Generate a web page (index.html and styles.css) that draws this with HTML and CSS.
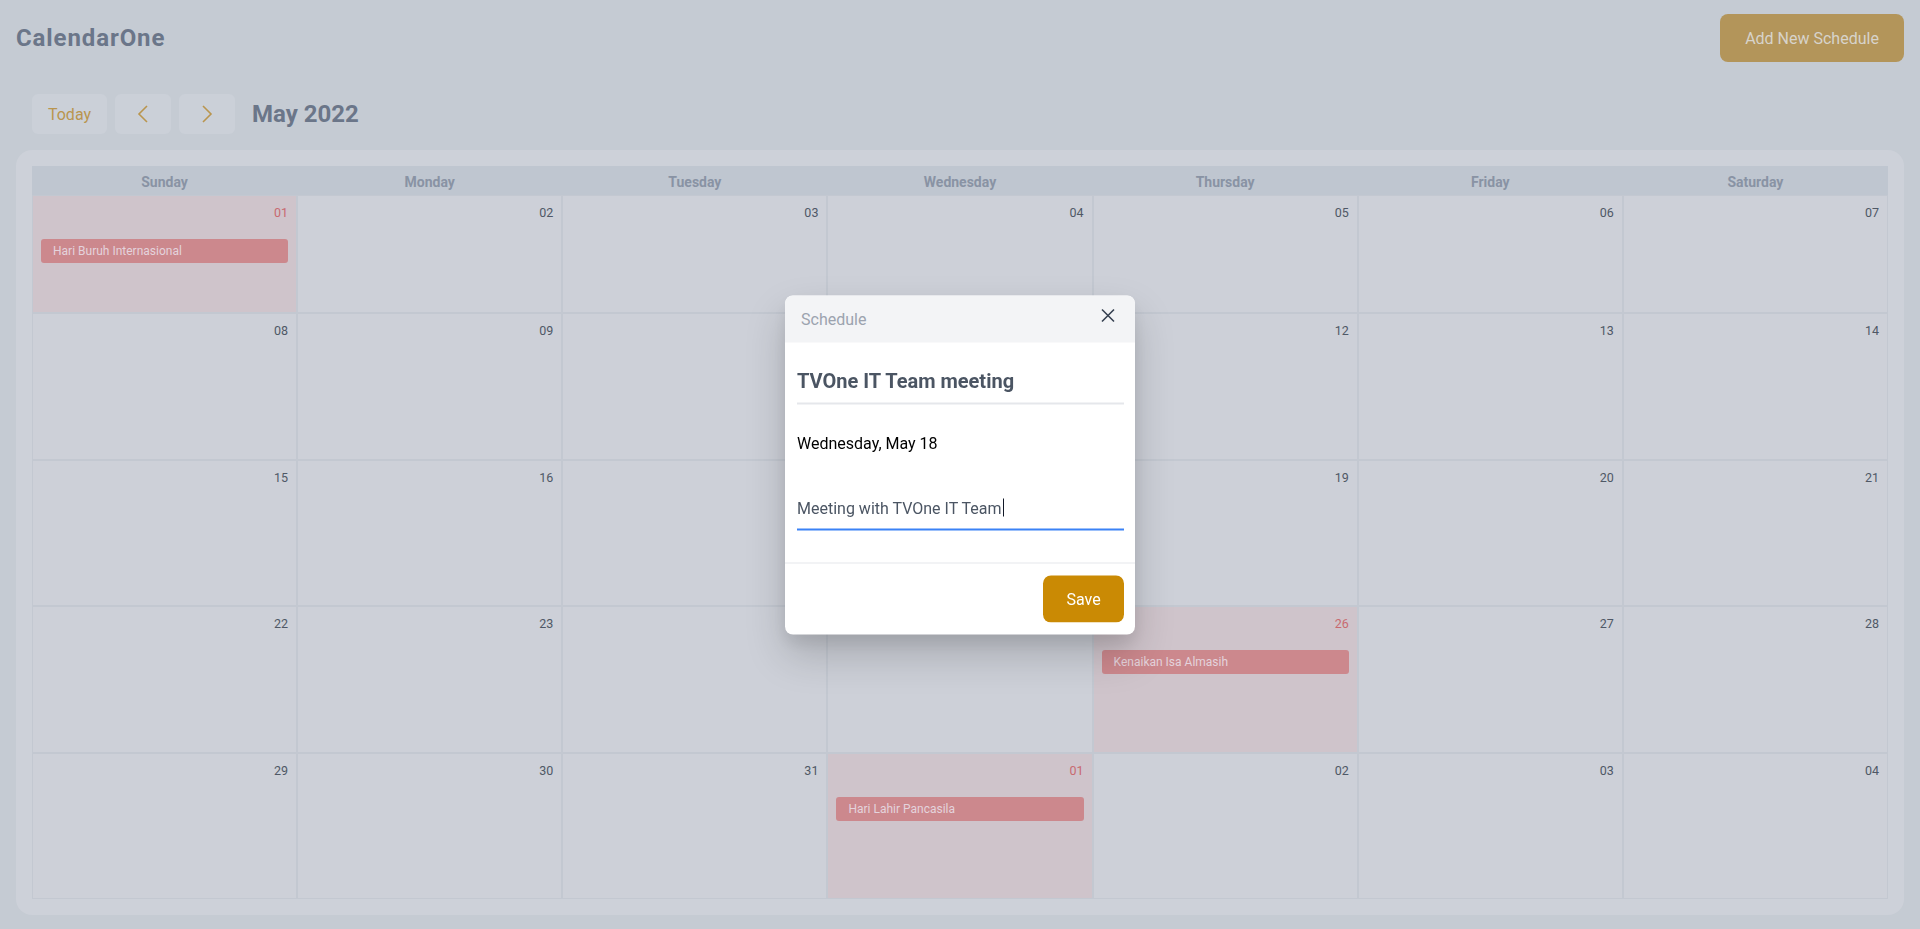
FILE: index.html
```html
<!DOCTYPE html>
<html lang="en">
<head>
<meta charset="utf-8">
<title>CalendarOne</title>
<link rel="stylesheet" href="styles.css">
</head>
<body>
<div class="page">
  <header class="topbar">
    <h1 class="brand">CalendarOne</h1>
    <button class="btn-add">Add New Schedule</button>
  </header>

  <div class="toolbar">
    <button class="tb-btn tb-today">Today</button>
    <button class="tb-btn tb-nav" aria-label="Previous">
      <svg width="12" height="18" viewBox="0 0 12 18"><path d="M10 1 L2 9 L10 17" fill="none" stroke="#b9954e" stroke-width="1.6"/></svg>
    </button>
    <button class="tb-btn tb-nav" aria-label="Next">
      <svg width="12" height="18" viewBox="0 0 12 18"><path d="M2 1 L10 9 L2 17" fill="none" stroke="#b9954e" stroke-width="1.6"/></svg>
    </button>
    <h2 class="month">May 2022</h2>
  </div>

  <section class="card">
    <div class="grid">
      <div class="dow">Sunday</div>
      <div class="dow">Monday</div>
      <div class="dow">Tuesday</div>
      <div class="dow">Wednesday</div>
      <div class="dow">Thursday</div>
      <div class="dow">Friday</div>
      <div class="dow">Saturday</div>

      <div class="cell holiday"><div class="date">01</div><div class="event">Hari Buruh Internasional</div></div>
      <div class="cell"><div class="date">02</div></div>
      <div class="cell"><div class="date">03</div></div>
      <div class="cell"><div class="date">04</div></div>
      <div class="cell"><div class="date">05</div></div>
      <div class="cell"><div class="date">06</div></div>
      <div class="cell"><div class="date">07</div></div>

      <div class="cell"><div class="date">08</div></div>
      <div class="cell"><div class="date">09</div></div>
      <div class="cell"><div class="date">10</div></div>
      <div class="cell"><div class="date">11</div></div>
      <div class="cell"><div class="date">12</div></div>
      <div class="cell"><div class="date">13</div></div>
      <div class="cell"><div class="date">14</div></div>

      <div class="cell"><div class="date">15</div></div>
      <div class="cell"><div class="date">16</div></div>
      <div class="cell"><div class="date">17</div></div>
      <div class="cell"><div class="date">18</div></div>
      <div class="cell"><div class="date">19</div></div>
      <div class="cell"><div class="date">20</div></div>
      <div class="cell"><div class="date">21</div></div>

      <div class="cell"><div class="date">22</div></div>
      <div class="cell"><div class="date">23</div></div>
      <div class="cell"><div class="date">24</div></div>
      <div class="cell"><div class="date">25</div></div>
      <div class="cell holiday"><div class="date">26</div><div class="event">Kenaikan Isa Almasih</div></div>
      <div class="cell"><div class="date">27</div></div>
      <div class="cell"><div class="date">28</div></div>

      <div class="cell"><div class="date">29</div></div>
      <div class="cell"><div class="date">30</div></div>
      <div class="cell"><div class="date">31</div></div>
      <div class="cell holiday"><div class="date">01</div><div class="event">Hari Lahir Pancasila</div></div>
      <div class="cell"><div class="date">02</div></div>
      <div class="cell"><div class="date">03</div></div>
      <div class="cell"><div class="date">04</div></div>
    </div>
  </section>
</div>

<div class="modal" role="dialog">
  <div class="modal-head">
    <span class="modal-label">Schedule</span>
    <svg class="modal-close" width="14" height="14" viewBox="0 0 14 14"><path d="M1 1 L13 13 M13 1 L1 13" stroke="#374151" stroke-width="1.6" fill="none"/></svg>
  </div>
  <div class="modal-body">
    <div class="field-title">TVOne IT Team meeting</div>
    <div class="field-date">Wednesday, May 18</div>
    <div class="field-desc">Meeting with TVOne IT Team<span class="caret"></span></div>
  </div>
  <div class="modal-foot">
    <button class="btn-save">Save</button>
  </div>
</div>
</body>
</html>
```

FILE: styles.css
```css
* { box-sizing: border-box; }

html, body {
  margin: 0;
  height: 100%;
}

body {
  background: #c5cbd3;
  font-family: Roboto, "Noto Sans", Arial, sans-serif;
  overflow: hidden;
}

button {
  font-family: inherit;
  border: none;
  cursor: pointer;
}

.page {
  padding: 14px 16px 0 16px;
}

.topbar {
  display: flex;
  align-items: center;
  justify-content: space-between;
  height: 48px;
}

.brand {
  margin: 0;
  font-size: 24px;
  font-weight: 700;
  color: #6b7689;
  letter-spacing: 0.9px;
}

.btn-add {
  width: 184px;
  height: 48px;
  background: #b3955a;
  color: #d7d3cb;
  font-size: 16px;
  border-radius: 8px;
}

.toolbar {
  display: flex;
  align-items: center;
  gap: 8px;
  margin-top: 32px;
  padding-left: 16px;
}

.tb-btn {
  height: 40px;
  background: #cbd0d8;
  border-radius: 6px;
  display: flex;
  align-items: center;
  justify-content: center;
  padding: 0;
}

.tb-today {
  width: 75px;
  color: #b9954e;
  font-size: 16px;
}

.tb-nav {
  width: 56px;
}

.month {
  margin: 0 0 0 9px;
  font-size: 24px;
  font-weight: 700;
  color: #6b7689;
}

.card {
  margin-top: 16px;
  background: #cdd1d9;
  border-radius: 16px;
  padding: 16px;
}

.grid {
  display: grid;
  grid-template-columns: repeat(7, 1fr);
  grid-template-rows: 29px 118px repeat(4, 146.5px);
}

.dow {
  background: #bfc6d0;
  color: #8993a4;
  font-size: 14px;
  font-weight: 700;
  display: flex;
  align-items: center;
  justify-content: center;
  padding-top: 2px;
}

.cell {
  background: #cdd0d8;
  border: 1px solid #c3c8d1;
}

.cell.holiday {
  background: #cfc4cb;
}

.date {
  padding: 10px 8px 0 8px;
  text-align: right;
  font-size: 12.5px;
  line-height: 14px;
  color: #4f5866;
}

.holiday .date {
  color: #c86a70;
}

.event {
  margin: 19px 8px 0 8px;
  height: 24px;
  line-height: 24px;
  padding-left: 12px;
  background: #cc888d;
  color: #e4d3dc;
  font-size: 12px;
  border-radius: 3px;
  white-space: nowrap;
  overflow: hidden;
}

/* Modal */
.modal {
  position: fixed;
  left: 50%;
  top: 50%;
  transform: translate(-50%, -50%);
  width: 350px;
  background: #ffffff;
  border-radius: 8px;
  overflow: hidden;
  box-shadow: 0 20px 40px rgba(0, 0, 0, 0.18), 0 8px 16px rgba(0, 0, 0, 0.08);
}

.modal-head {
  height: 47px;
  background: #f3f4f6;
  display: flex;
  align-items: center;
  justify-content: space-between;
  padding: 0 20px 0 16px;
}

.modal-label {
  color: #9ca3af;
  font-size: 16px;
}

.modal-close {
  margin-top: -6px;
}

.modal-body {
  padding: 16px 11px 32px 12px;
}

.field-title {
  padding: 8px 0;
  line-height: 28px;
  font-size: 20px;
  font-weight: 700;
  color: #4b5563;
  border-bottom: 2px solid #e5e7eb;
}

.field-date {
  margin-top: 27px;
  line-height: 24px;
  font-size: 16px;
  color: #000000;
}

.field-desc {
  margin-top: 33px;
  padding: 8px 0;
  line-height: 24px;
  font-size: 16px;
  color: #4b5563;
  border-bottom: 2px solid #3b82f6;
}

.caret {
  display: inline-block;
  width: 1px;
  height: 18px;
  background: #111827;
  vertical-align: -3px;
  margin-left: 1px;
}

.modal-foot {
  border-top: 1px solid #e5e7eb;
  padding: 12px 11px 12px 12px;
  display: flex;
  justify-content: flex-end;
}

.btn-save {
  width: 81px;
  height: 47px;
  background: #ca8a04;
  color: #ffffff;
  font-size: 16px;
  border-radius: 8px;
}
```
